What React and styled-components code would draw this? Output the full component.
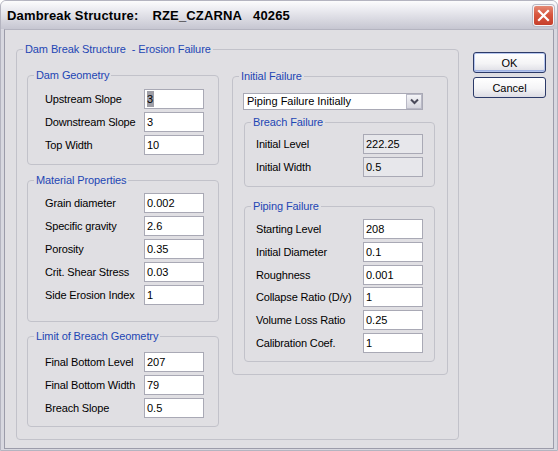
import React from "react";
import styled, { createGlobalStyle, css } from "styled-components";

const GlobalStyle = createGlobalStyle`
  html, body { margin: 0; padding: 0; background: #ffffff; }
  body { font-family: "Liberation Sans", Arial, sans-serif; font-size: 11px; color: #000; }
  * { box-sizing: border-box; }
`;

const Window = styled.div`
  width: 558px;
  height: 451px;
  display: flex;
  flex-direction: column;
  background: #d8d8e0;
  border: 1px solid #b4b4c0;
  border-radius: 6px 6px 0 0;
  overflow: hidden;
`;

const TitleBar = styled.div`
  height: 28px;
  flex: none;
  display: flex;
  align-items: center;
  justify-content: space-between;
  padding: 0 3px 0 6px;
  background: linear-gradient(#fcfcfd 0%, #ececf1 30%, #d9d9e1 65%, #c6c6d1 100%);
`;

const Title = styled.div`
  display: flex;
  font-weight: bold;
  font-size: 13px;
  letter-spacing: 0.15px;
  white-space: nowrap;
  color: #000;
`;

const TitlePart = styled.span`
  margin-left: ${(p) => p.$gap || 0}px;
`;

const CloseButton = styled.div`
  width: 21px;
  height: 21px;
  border-radius: 3px;
  border: 1px solid #f4f4f6;
  background: linear-gradient(#e48a76 0%, #d8573f 45%, #c63e2b 100%);
  display: flex;
  align-items: center;
  justify-content: center;
  box-shadow: 0 0 0 1px #b8b8c4;
`;

const Frame = styled.div`
  flex: 1;
  display: flex;
  padding: 0 3px 1px 3px;
`;

const Client = styled.div`
  flex: 1;
  display: flex;
  align-items: flex-start;
  background: #e0dfe3;
  padding: 19px 0 0 11px;
  border: 1px solid #9c9caa;
  border-top-color: #b4b4c0;
`;

const Group = styled.div`
  position: relative;
  flex: none;
  width: ${(p) => p.$w}px;
  height: ${(p) => p.$h}px;
  border: 1px solid #c2c2ca;
  border-radius: 4px;
  padding: ${(p) => p.$pt || 0}px ${(p) => p.$pr || 0}px 0 ${(p) => p.$pl || 0}px;
  margin: ${(p) => p.$m || "0"};
`;

const Legend = styled.span`
  position: absolute;
  top: -8px;
  left: 6px;
  padding: 0 2px;
  line-height: 14px;
  font-size: 11px;
  letter-spacing: -0.1px;
  color: #1e46b4;
  background: #e0dfe3;
  white-space: pre;
`;

const Columns = styled.div`
  display: flex;
  align-items: flex-start;
  gap: 13px;
`;

const Column = styled.div`
  display: flex;
  flex-direction: column;
  gap: ${(p) => p.$gap || 0}px;
  margin-top: ${(p) => p.$mt || 0}px;
`;

const Rows = styled.div`
  display: flex;
  flex-direction: column;
  gap: ${(p) => p.$gap ?? 3}px;
`;

const Row = styled.div`
  display: grid;
  grid-template-columns: ${(p) => p.$label}px 60px;
  align-items: center;
  height: 20px;
`;

const Label = styled.span`
  font-size: 11px;
  letter-spacing: -0.15px;
  white-space: nowrap;
`;

const Field = styled.div`
  height: 20px;
  border: 1px solid #a9a9b5;
  background: ${(p) => (p.$readOnly ? "#e7e7eb" : "#ffffff")};
  padding: 0 2px;
  line-height: 18px;
  font-size: 11px;
  white-space: nowrap;
`;

const Selected = styled.span`
  display: inline-block;
  background: #9e9ea6;
  line-height: 16px;
  padding-right: 1px;
`;

const Select = styled.div`
  width: 180px;
  height: 17px;
  border: 1px solid #a9a9b5;
  background: #fff;
  display: flex;
  align-items: stretch;
  margin-bottom: 12px;
`;

const SelectText = styled.div`
  flex: 1;
  padding-left: 3px;
  line-height: 15px;
  font-size: 11px;
`;

const SelectArrow = styled.div`
  width: 16px;
  display: flex;
  align-items: center;
  justify-content: center;
  border: 1px solid #b9b9c6;
  background: linear-gradient(#f4f4f7, #d6d6de);
`;

const ButtonColumn = styled.div`
  display: flex;
  flex-direction: column;
  gap: 4px;
  margin: 3px 0 0 14px;
`;

const Button = styled.div`
  width: 73px;
  height: 21px;
  border: 1px solid #2c3a68;
  border-radius: 3px;
  background: linear-gradient(#ffffff 0%, #f4f4f6 55%, #dcdce4 100%);
  display: flex;
  align-items: center;
  justify-content: center;
  font-size: 11px;
  ${(p) =>
    p.$default &&
    css`
      box-shadow: inset 0 0 0 1px #b6c6ee, inset 0 -2px 0 0 #9fb2e2;
    `}
`;

const FieldRows = ({ label, rows, gap }) => (
  <Rows $gap={gap}>
    {rows.map(([name, value, ro, sel]) => (
      <Row key={name} $label={label}>
        <Label>{name}</Label>
        <Field $readOnly={ro}>{sel ? <Selected>{value}</Selected> : value}</Field>
      </Row>
    ))}
  </Rows>
);

export default function App() {
  return (
    <>
      <GlobalStyle />
      <Window>
        <TitleBar>
          <Title>
            <TitlePart>Dambreak Structure:</TitlePart>
            <TitlePart $gap={14}>RZE_CZARNA</TitlePart>
            <TitlePart $gap={11}>40265</TitlePart>
          </Title>
          <CloseButton>
            <svg width="13" height="13" viewBox="0 0 13 13">
              <path d="M2 2 L11 11 M11 2 L2 11" stroke="#fff" strokeWidth="2.2" strokeLinecap="square" />
            </svg>
          </CloseButton>
        </TitleBar>
        <Frame>
          <Client>
            <Group $w={443} $h={391} $pt={25} $pl={10} $pr={10}>
              <Legend>{"Dam Break Structure  - Erosion Failure"}</Legend>
              <Columns>
                <Column $gap={14}>
                  <Group $w={192} $h={90} $pt={13} $pl={17} $m="0 0 1px 0">
                    <Legend>Dam Geometry</Legend>
                    <FieldRows
                      label={99}
                      rows={[
                        ["Upstream Slope", "3", false, true],
                        ["Downstream Slope", "3"],
                        ["Top Width", "10"],
                      ]}
                    />
                  </Group>
                  <Group $w={192} $h={142} $pt={12} $pl={17}>
                    <Legend>Material Properties</Legend>
                    <FieldRows
                      label={99}
                      rows={[
                        ["Grain diameter", "0.002"],
                        ["Specific gravity", "2.6"],
                        ["Porosity", "0.35"],
                        ["Crit. Shear Stress", "0.03"],
                        ["Side Erosion Index", "1"],
                      ]}
                    />
                  </Group>
                  <Group $w={192} $h={91} $pt={15} $pl={17}>
                    <Legend>Limit of Breach Geometry</Legend>
                    <FieldRows
                      label={99}
                      rows={[
                        ["Final Bottom Level", "207"],
                        ["Final Bottom Width", "79"],
                        ["Breach Slope", "0.5"],
                      ]}
                    />
                  </Group>
                </Column>
                <Column $mt={1}>
                  <Group $w={216} $h={299} $pt={16} $pl={10}>
                    <Legend>Initial Failure</Legend>
                    <Select>
                      <SelectText>Piping Failure Initially</SelectText>
                      <SelectArrow>
                        <svg width="9" height="7" viewBox="0 0 9 7">
                          <path d="M1 1.5 L4.5 5 L8 1.5" fill="none" stroke="#4a4a5a" strokeWidth="2" />
                        </svg>
                      </SelectArrow>
                    </Select>
                    <Group $w={191} $h={65} $pt={11} $pl={11} $m="0 0 19px 1px">
                      <Legend>Breach Failure</Legend>
                      <FieldRows
                        label={107}
                        rows={[
                          ["Initial Level", "222.25", true],
                          ["Initial Width", "0.5", true],
                        ]}
                      />
                    </Group>
                    <Group $w={191} $h={156} $pt={12} $pl={11} $m="0 0 0 1px">
                      <Legend>Piping Failure</Legend>
                      <FieldRows
                        label={107}
                        gap={2.8}
                        rows={[
                          ["Starting Level", "208"],
                          ["Initial Diameter", "0.1"],
                          ["Roughness", "0.001"],
                          ["Collapse Ratio (D/y)", "1"],
                          ["Volume Loss Ratio", "0.25"],
                          ["Calibration Coef.", "1"],
                        ]}
                      />
                    </Group>
                  </Group>
                </Column>
              </Columns>
            </Group>
            <ButtonColumn>
              <Button $default>OK</Button>
              <Button>Cancel</Button>
            </ButtonColumn>
          </Client>
        </Frame>
      </Window>
    </>
  );
}
